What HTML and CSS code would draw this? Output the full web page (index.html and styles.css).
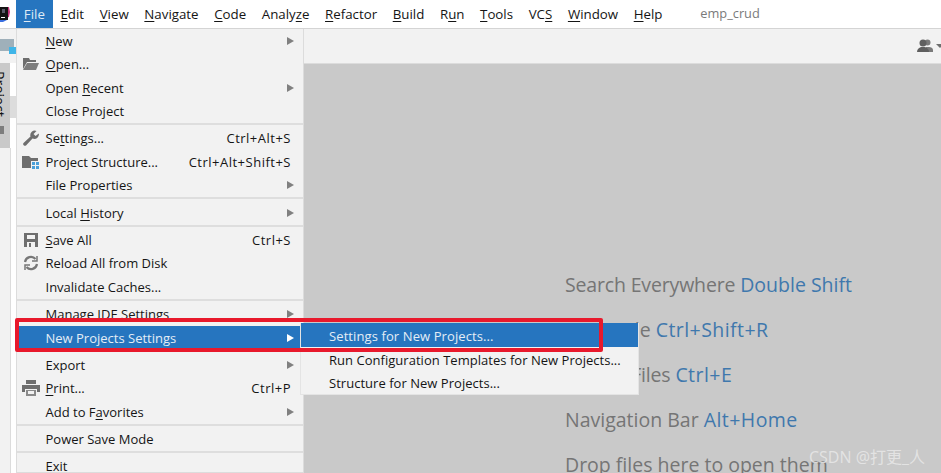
FILE: index.html
```html
<!DOCTYPE html>
<html lang="en">
<head>
<meta charset="utf-8">
<title>File menu</title>
<link rel="stylesheet" href="styles.css">
</head>
<body>
<header class="menubar">
  <svg class="logo" width="10" height="16" viewBox="0 0 10 16"><path d="M5 1h4l1 5-1 5-4 1z" fill="#c8327c"/><path d="M0 1h8v13H0z" fill="#141414"/><path d="M2 3h3v4H2z" fill="#5a5a6a"/><path d="M1 11h4v1H1z" fill="#fff"/><path d="M0 14h7l-4 2H0z" fill="#3a6fe0"/></svg>
  <nav class="menus">
    <span class="menu active"><u>F</u>ile</span>
    <span class="menu"><u>E</u>dit</span>
    <span class="menu"><u>V</u>iew</span>
    <span class="menu"><u>N</u>avigate</span>
    <span class="menu"><u>C</u>ode</span>
    <span class="menu">Analy<u>z</u>e</span>
    <span class="menu"><u>R</u>efactor</span>
    <span class="menu"><u>B</u>uild</span>
    <span class="menu">R<u>u</u>n</span>
    <span class="menu"><u>T</u>ools</span>
    <span class="menu">VC<u>S</u></span>
    <span class="menu"><u>W</u>indow</span>
    <span class="menu"><u>H</u>elp</span>
  </nav>
  <span class="project-title">emp_crud</span>
</header>

<div class="workspace">
  <aside class="sidebar">
    <div class="crumb-icon"><span class="crumb-folder"></span><span class="crumb-badge"></span></div>
    <div class="tool-tab"><span class="tool-tab-label">Project</span><span class="tool-tab-mark"></span></div>
    <div class="tool-rest"></div>
    <span class="tool-hover"></span>
  </aside>
  <main class="editor">
    <div class="toolbar">
      <svg class="user-icon" width="16" height="14" viewBox="0 0 16 14"><circle cx="10.500" cy="3.500" r="3" fill="#7a7a7a"/><path d="M9 13V8h3c2 0 4 1 4 3v2z" fill="#7a7a7a"/><circle cx="6" cy="4" r="3.500" fill="#5f5f5f"/><path d="M0 13c0-3 2-4 4-5h4c2 1 4 2 4 5z" fill="#5f5f5f"/></svg>
      <span class="user-caret"></span>
    </div>
    <div class="empty-state">
      <p class="hint hint-tight">Search Everywhere <b class="plain">Double Shift</b></p>
      <p class="hint">Go to File <b>Ctrl+Shift+R</b></p>
      <p class="hint hint-tight">Recent Files <b>Ctrl+E</b></p>
      <p class="hint">Navigation Bar <b>Alt+Home</b></p>
      <p class="hint">Drop files here to open them</p>
    </div>
  </main>
</div>

<section class="dropdown">
  <div class="group">
    <div class="item"><span class="ic"></span><span class="lbl"><u>N</u>ew</span><i class="arrow"></i></div>
    <div class="item"><span class="ic"><svg width="18" height="14" viewBox="0 0 18 14"><path d="M1 1h6l1 2h6v2H5L1 12z" fill="#6e6e6e"/><path d="M5 6h12l-3 7H1z" fill="#7d7d7d"/></svg></span><span class="lbl"><u>O</u>pen...</span></div>
    <div class="item"><span class="ic"></span><span class="lbl">Open <u>R</u>ecent</span><i class="arrow"></i></div>
    <div class="item"><span class="ic"></span><span class="lbl">Close Project</span></div>
  </div>
  <div class="group">
    <div class="item"><span class="ic"><svg width="16" height="16" viewBox="0 0 16 16"><path d="M0.500 13l7-6.500a4.500 4.500 0 0 1 6-5.500l-3 3 2 2 3.300-2.500a4.500 4.500 0 0 1-6.300 5l-6.500 7a1.800 1.800 0 0 1-2.500-2.500z" fill="#6e6e6e"/></svg></span><span class="lbl">Se<u>t</u>tings...</span><span class="key">Ctrl+Alt+S</span></div>
    <div class="item"><span class="ic"><svg width="18" height="14" viewBox="0 0 18 14"><path d="M0 1h7l2 2h7v3H9v7H0z" fill="#6e6e6e"/><path d="M10 7h3v3h-3zM14 7h3v3h-3zM10 11h3v3h-3zM14 11h3v3h-3z" fill="#4a9fd8"/></svg></span><span class="lbl">Project Structure...</span><span class="key">Ctrl+Alt+Shift+S</span></div>
    <div class="item"><span class="ic"></span><span class="lbl">File Properties</span><i class="arrow"></i></div>
  </div>
  <div class="group">
    <div class="item"><span class="ic"></span><span class="lbl">Local <u>H</u>istory</span><i class="arrow"></i></div>
  </div>
  <div class="group">
    <div class="item"><span class="ic"><svg width="16" height="16" viewBox="0 0 16 16"><path d="M1 1h14v14H1z" fill="#6e6e6e"/><path d="M4 3h8v4H4z" fill="#f2f2f2"/><path d="M4 10h8v5H4z" fill="#f2f2f2"/><path d="M6 11h2v4H6z" fill="#6e6e6e"/></svg></span><span class="lbl"><u>S</u>ave All</span><span class="key">Ctrl+S</span></div>
    <div class="item"><span class="ic"><svg width="16" height="16" viewBox="0 0 16 16" fill="none" stroke="#777" stroke-width="2.200"><path d="M2 7a6 6 0 0 1 10.500-3"/><path d="M14 9a6 6 0 0 1-10.500 3"/><path d="M14 1v5H9M2 15v-5h5" stroke-width="1.500"/></svg></span><span class="lbl">Reload All from Disk</span></div>
    <div class="item"><span class="ic"></span><span class="lbl">Invalidate Caches...</span></div>
  </div>
  <div class="group">
    <div class="item"><span class="ic"></span><span class="lbl">Manage IDE Settings</span><i class="arrow"></i></div>
    <div class="item selected"><span class="ic"></span><span class="lbl">New Projects Settings</span><i class="arrow"></i></div>
  </div>
  <div class="group">
    <div class="item"><span class="ic"></span><span class="lbl">Export</span><i class="arrow"></i></div>
    <div class="item"><span class="ic"><svg width="18" height="16" viewBox="0 0 18 16"><path d="M4 0h10v4H4z" fill="#6e6e6e"/><path d="M0 5h18v7h-3V9H3v3H0z" fill="#6e6e6e"/><path d="M4 10h10v6H4z" fill="#8a8a8a"/><path d="M6 11h6v3H6z" fill="#f2f2f2"/></svg></span><span class="lbl"><u>P</u>rint...</span><span class="key">Ctrl+P</span></div>
    <div class="item"><span class="ic"></span><span class="lbl">Add to F<u>a</u>vorites</span><i class="arrow"></i></div>
  </div>
  <div class="group">
    <div class="item"><span class="ic"></span><span class="lbl">Power Save Mode</span></div>
  </div>
  <div class="group">
    <div class="item"><span class="ic"></span><span class="lbl">Exit</span></div>
  </div>
</section>

<section class="submenu">
  <div class="sub-item selected">Settings for New Projects...</div>
  <div class="sub-item">Run Configuration Templates for New Projects...</div>
  <div class="sub-item">Structure for New Projects...</div>
</section>

<div class="highlight-box"></div>
<div class="watermark">CSDN @打更_人</div>
</body>
</html>
```

FILE: styles.css
```css
* { box-sizing: border-box; }
html, body { margin: 0; height: 100%; }
body {
  width: 941px;
  height: 473px;
  overflow: hidden;
  position: relative;
  background: #f2f2f2;
  font-family: "Open Sans", "Noto Sans", sans-serif;
  font-size: 13px;
  color: #151515;
}
u { text-underline-offset: 2px; text-decoration-thickness: 1px; }

.menubar {
  height: 29px;
  display: flex;
  align-items: center;
  background: #fff;
  border-bottom: 1px solid #d4d4d4;
}
.logo { flex: none; margin-right: 6px; }
.menus { display: flex; align-self: stretch; }
.menu {
  display: flex;
  align-items: center;
  padding: 0 7.800px;
  white-space: nowrap;
  font-size: 13.300px;
}
.menu.active { background: #2675bf; color: #dfeaf5; }
.project-title { margin-left: 30px; margin-top: -2px; font-size: 12.800px; color: #7a7a7a; }

.workspace { display: flex; height: 444px; }
.sidebar { width: 16px; flex: none; background: #fff; display: flex; flex-direction: column; position: relative; }
.crumb-icon { height: 34px; flex: none; position: relative; background: #f2f2f2; }
.crumb-folder { position: absolute; left: 0; top: 10px; width: 14px; height: 12px; background: #9fb0ba; }
.crumb-badge { position: absolute; left: 9px; top: 18px; width: 7px; height: 7px; background: #3fb5e8; }
.tool-tab { width: 10px; height: 85px; flex: none; background: #c9c9c9; position: relative; overflow: hidden; }
.tool-tab-label {
  position: absolute;
  left: -10px;
  top: 8px;
  writing-mode: vertical-rl;
  font-size: 14px;
  color: #111;
}
.tool-tab-mark { position: absolute; left: 0; top: 63px; width: 4px; height: 8px; background: #7d7d7d; }
.tool-hover { position: absolute; left: 10px; top: 67px; width: 6px; height: 22px; background: #dcdcdc; }
.tool-rest { flex: 1; width: 11px; background: #f2f2f2; border-right: 1px solid #dcdcdc; }
.editor { flex: 1; display: flex; flex-direction: column; }
.toolbar {
  height: 35px;
  flex: none;
  display: flex;
  align-items: center;
  justify-content: flex-end;
  gap: 2px;
  background: #f2f2f2;
  border-bottom: 1px solid #dcdcdc;
}
.user-icon { margin-right: 1px; }
.user-caret { width: 0; height: 0; border: 4px solid transparent; border-top-color: #6e6e6e; border-bottom: 0; margin-right: -3px; }
.empty-state { flex: 1; background: #c9c9c9; padding: 206px 0 0 549px; overflow: hidden; }
.hint { margin: 0 0 15px; font-size: 19.500px; line-height: 30px; color: #757575; white-space: nowrap; }
.hint-tight { letter-spacing: -0.160px; }
.hint b { font-weight: 400; color: #3f78ad; letter-spacing: 0.450px; }
.hint b.plain { letter-spacing: 0; }

.dropdown {
  position: absolute;
  left: 16px;
  top: 29px;
  width: 288px;
  height: 444px;
  background: #f2f2f2;
  border: 1px solid #dcdcdc;
  border-top: 0;
}
.group { border-bottom: 2px solid #dedede; padding-bottom: 0.300px; margin-bottom: 1.400px; }
.group:last-child { border-bottom: 0; }
.item { height: 23.500px; display: flex; align-items: center; padding-right: 9px; white-space: nowrap; }
.ic { width: 28.500px; flex: none; display: flex; justify-content: center; align-items: center; }
.lbl { flex: 1; }
.key { letter-spacing: 0.500px; margin-right: 3px; }
.arrow { width: 0; height: 0; border-left: 7px solid #808080; border-top: 4px solid transparent; border-bottom: 4px solid transparent; }
.item.selected { background: #2675bf; color: #e4edf6; }
.item.selected .arrow { border-left-color: #fff; }

.submenu {
  position: absolute;
  left: 300px;
  top: 323px;
  width: 339px;
  height: 72px;
  background: #f2f2f2;
  border: 1px solid #e4e4e4;
  border-top: 0;
}
.sub-item { height: 23px; display: flex; align-items: center; padding: 2px 0 0 28px; white-space: nowrap; letter-spacing: 0.030px; }
.sub-item.selected { height: 24px; background: #2675bf; color: #e4edf6; letter-spacing: 0.100px; }

.highlight-box {
  position: absolute;
  left: 15px;
  top: 318px;
  width: 588px;
  height: 34px;
  border: 4px solid #e8192c;
  border-radius: 2px;
}
.watermark {
  position: absolute;
  left: 809px;
  top: 444px;
  font-family: "Open Sans", "Noto Sans CJK SC", sans-serif;
  font-size: 16px;
  color: #e8e8e8;
  opacity: 0.85;
  white-space: nowrap;
}
```
